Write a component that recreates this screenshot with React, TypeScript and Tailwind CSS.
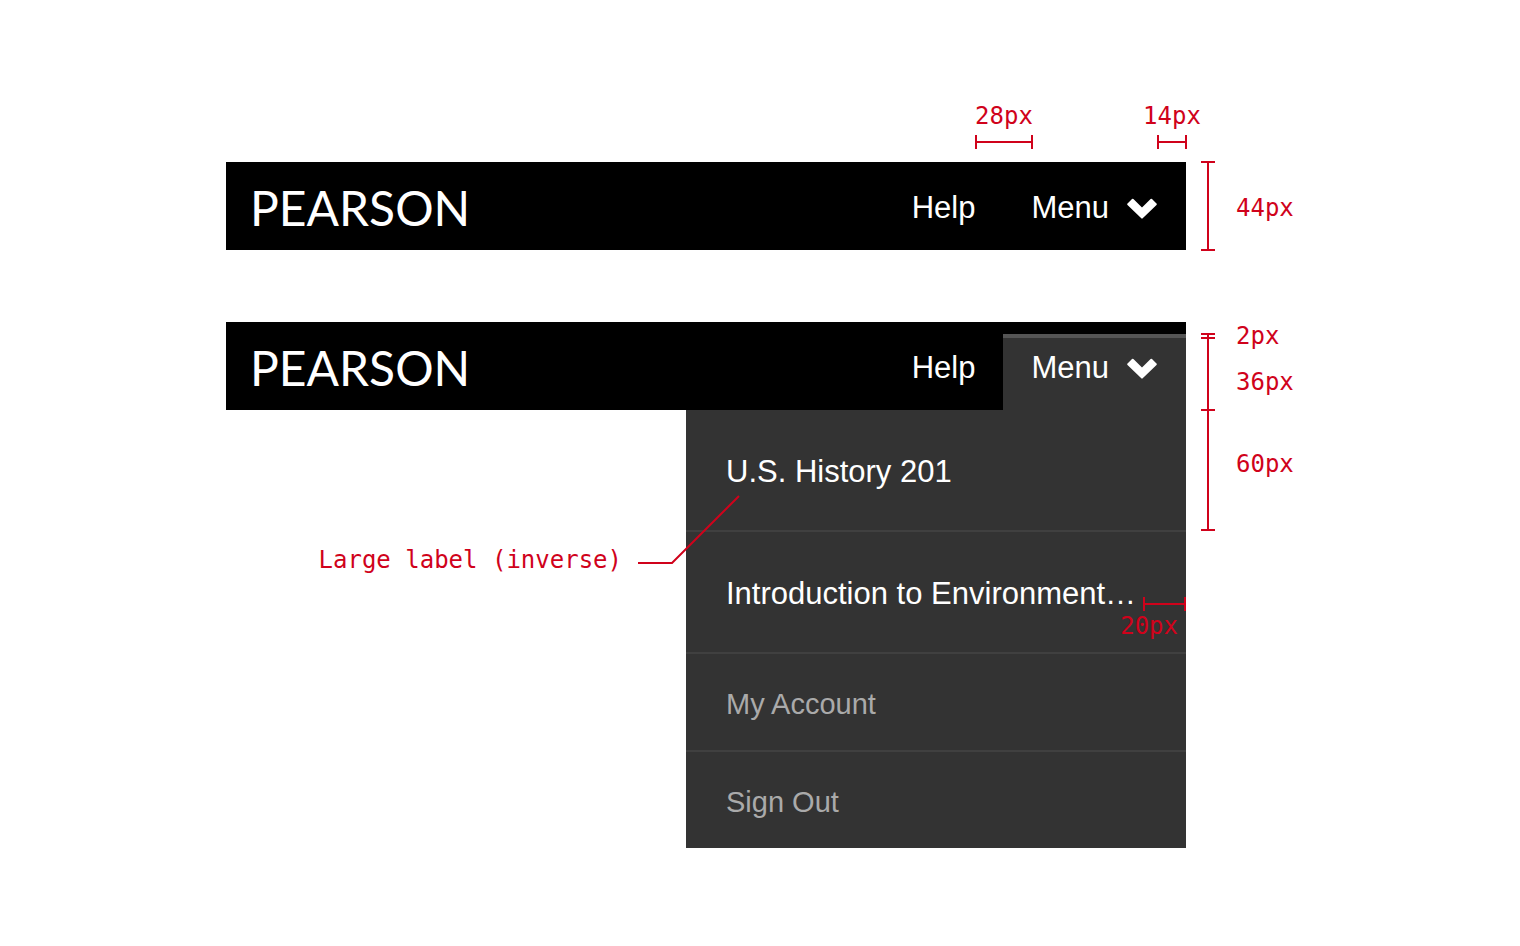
import type { ReactNode } from "react";

const mono = "font-['DejaVu_Sans_Mono',monospace] text-2xl leading-6 whitespace-nowrap text-[#d0021b]";

function Chevron() {
  return (
    <svg width="30" height="21" viewBox="0 0 30 21" fill="#fff" aria-hidden="true">
      <path d="M.5 5.500 5 1Q5.700.3 6.400 1L15 9.600 23.600 1Q24.300.3 25 1L29.500 5.500Q30.200 6.200 29.500 6.900L15.700 20.300Q15 21 14.300 20.300L.5 6.900Q-.2 6.200.5 5.500Z" />
    </svg>
  );
}

function AppBar({ open = false }: { open?: boolean }) {
  return (
    <header className="flex h-22 justify-between bg-black pl-6 text-[31px] leading-10 text-white">
      <a href="#home" className="flex items-center pt-1 font-[Lato,sans-serif] text-5xl leading-none">
        PEARSON
      </a>
      <nav className="mt-3 flex" aria-label="Main">
        <a href="#help" className="flex items-center border-t-4 border-black px-7 pb-3">
          Help
        </a>
        <button
          type="button"
          aria-expanded={open}
          className={
            open
              ? "flex items-center gap-[18px] border-t-4 border-[#555] bg-[#333] pr-[29px] pb-3 pl-7"
              : "flex items-center gap-[18px] border-t-4 border-black pr-[29px] pb-3 pl-7"
          }
        >
          Menu
          <Chevron />
        </button>
      </nav>
    </header>
  );
}

function Bracket() {
  return (
    <div className="flex h-[14px] w-full items-center">
      <div className="h-full w-0.5 bg-[#d0021b]" />
      <div className="h-0.5 flex-1 bg-[#d0021b]" />
      <div className="h-full w-0.5 bg-[#d0021b]" />
    </div>
  );
}

function Span({ label, width }: { label: string; width: string }) {
  return (
    <div className={`flex flex-col items-center gap-[7px] ${width}`}>
      <span className={mono}>{label}</span>
      <Bracket />
    </div>
  );
}

function Tick() {
  return <div className="h-0.5 w-[14px] bg-[#d0021b]" />;
}

function Stem({ size }: { size: string }) {
  return <div className={`w-0.5 bg-[#d0021b] ${size}`} />;
}

function Item({ children, note, large = false }: { children: ReactNode; note?: ReactNode; large?: boolean }) {
  return (
    <li className="relative border-b-2 border-[#404040] last:border-b-0">
      <a
        href="#item"
        className={
          large
            ? "flex h-30 items-center px-10 pt-1 text-[31px] leading-10 text-white"
            : "flex h-24 items-center px-10 pt-1 text-[29px] leading-10 text-[#aaa]"
        }
      >
        {children}
      </a>
      {note}
    </li>
  );
}

function LabelNote() {
  return (
    <div className="absolute top-[85px] right-[446px] flex gap-4">
      <span className={`${mono} pt-[53px]`}>Large label (inverse)</span>
      <svg width="102" height="70" viewBox="0 0 102 70" fill="none" stroke="#d0021b" strokeWidth="2" aria-hidden="true">
        <path d="M0 68H34L101 1" />
      </svg>
    </div>
  );
}

function InsetNote() {
  return (
    <div className="absolute top-[65px] right-0 flex w-[43px] flex-col items-end gap-[3px]">
      <Bracket />
      <span className={`${mono} pr-2`}>20px</span>
    </div>
  );
}

export default function App() {
  return (
    <main className="min-h-screen bg-white px-4 font-['Liberation_Sans',Arial,sans-serif]">
      <div className="mx-auto flex max-w-[1068px] flex-col pt-26">
        <div className="-mr-px flex justify-end gap-[124px] pr-[108px] pb-[13px]">
          <Span label="28px" width="w-[58px]" />
          <Span label="14px" width="w-[30px]" />
        </div>

        <section className="flex">
          <div className="flex-1">
            <AppBar />
          </div>
          <div className="-my-px ml-[15px] flex w-[93px] items-center gap-[21px]">
            <div className="flex flex-col items-center">
              <Tick />
              <Stem size="h-[86px]" />
              <Tick />
            </div>
            <span className={`${mono} pt-1`}>44px</span>
          </div>
        </section>

        <section className="mt-18 flex items-start">
          <div className="flex-1">
            <AppBar open />
            <ul className="ml-auto w-[500px] bg-[#333]">
              <Item large note={<LabelNote />}>
                U.S. History 201
              </Item>
              <Item large note={<InsetNote />}>
                Introduction to Environment…
              </Item>
              <Item>My Account</Item>
              <Item>Sign Out</Item>
            </ul>
          </div>
          <div className="ml-[15px] flex w-[93px] gap-[21px]">
            <div className="flex flex-col items-center pt-[11px]">
              <Tick />
              <Stem size="h-0.5" />
              <Tick />
              <Stem size="h-[70px]" />
              <Tick />
              <Stem size="h-[118px]" />
              <Tick />
            </div>
            <div className="flex flex-col pt-0.5">
              <span className={mono}>2px</span>
              <span className={`${mono} mt-[22px]`}>36px</span>
              <span className={`${mono} mt-[58px]`}>60px</span>
            </div>
          </div>
        </section>
      </div>
    </main>
  );
}
